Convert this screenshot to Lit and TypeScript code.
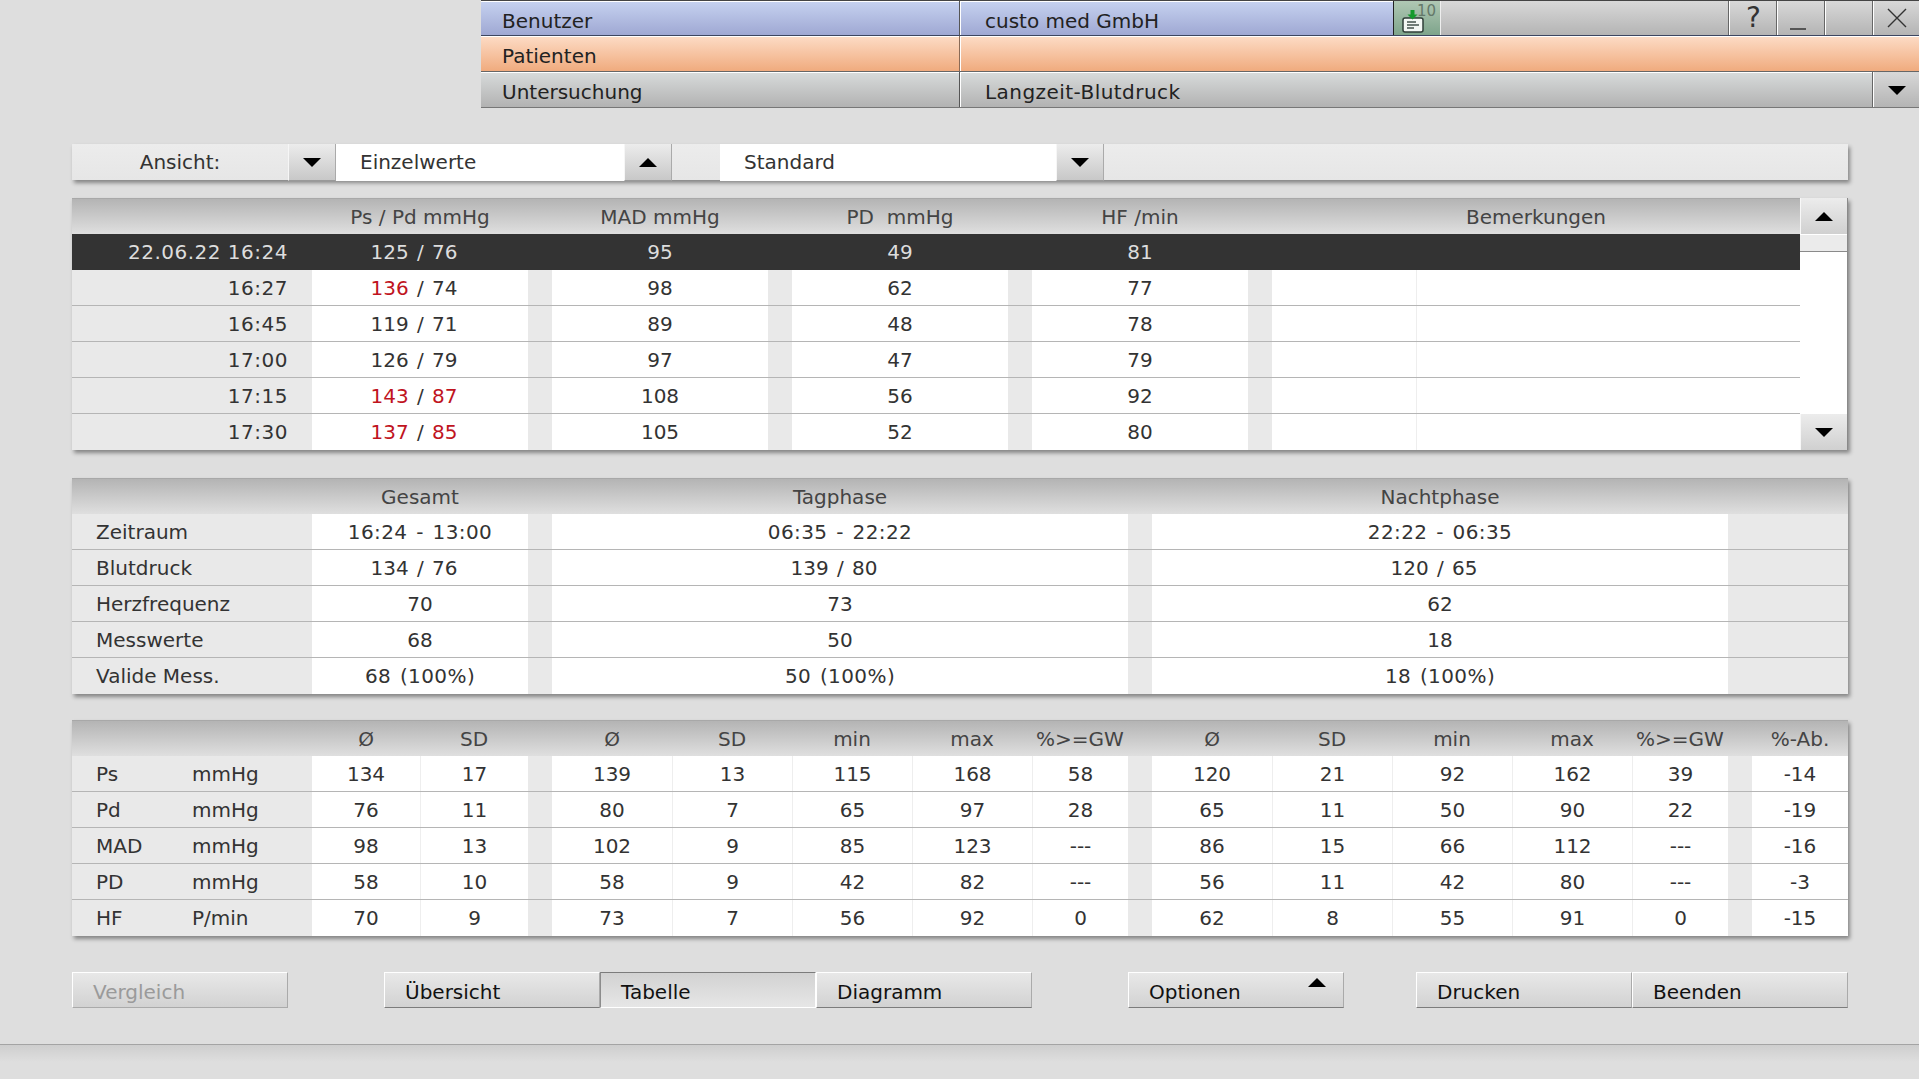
import { LitElement, html, css, svg } from 'lit';
import { customElement } from 'lit/decorators.js';

const arrow = (dir: 'up' | 'down') => html`
  <svg class="arrow" width="18" height="9" viewBox="0 0 18 9">
    ${dir === 'up'
      ? svg`<polygon points="9,0 18,9 0,9" fill="#000"></polygon>`
      : svg`<polygon points="0,0 18,0 9,9" fill="#000"></polygon>`}
  </svg>
`;

const singleRows = [
  { time: '22.06.22 16:24', ps: '125', pd: '76', mad: '95', pp: '49', hf: '81', sel: true },
  { time: '16:27', ps: '136', pd: '74', mad: '98', pp: '62', hf: '77', redPs: true },
  { time: '16:45', ps: '119', pd: '71', mad: '89', pp: '48', hf: '78' },
  { time: '17:00', ps: '126', pd: '79', mad: '97', pp: '47', hf: '79' },
  { time: '17:15', ps: '143', pd: '87', mad: '108', pp: '56', hf: '92', redPs: true, redPd: true },
  { time: '17:30', ps: '137', pd: '85', mad: '105', pp: '52', hf: '80', redPs: true, redPd: true },
];

const summaryRows = [
  ['Zeitraum', '16:24 - 13:00', '06:35 - 22:22', '22:22 - 06:35'],
  ['Blutdruck', '134 / 76', '139 / 80', '120 / 65'],
  ['Herzfrequenz', '70', '73', '62'],
  ['Messwerte', '68', '50', '18'],
  ['Valide Mess.', '68 (100%)', '50 (100%)', '18 (100%)'],
];

const statHead = ['Ø', 'SD', '', 'Ø', 'SD', 'min', 'max', '%>=GW', '', 'Ø', 'SD', 'min', 'max', '%>=GW', '', '%-Ab.'];

const statRows = [
  ['Ps', 'mmHg', '134', '17', '', '139', '13', '115', '168', '58', '', '120', '21', '92', '162', '39', '', '-14'],
  ['Pd', 'mmHg', '76', '11', '', '80', '7', '65', '97', '28', '', '65', '11', '50', '90', '22', '', '-19'],
  ['MAD', 'mmHg', '98', '13', '', '102', '9', '85', '123', '---', '', '86', '15', '66', '112', '---', '', '-16'],
  ['PD', 'mmHg', '58', '10', '', '58', '9', '42', '82', '---', '', '56', '11', '42', '80', '---', '', '-3'],
  ['HF', 'P/min', '70', '9', '', '73', '7', '56', '92', '0', '', '62', '8', '55', '91', '0', '', '-15'],
];

// "134 / 76" sits left of centre in the original, other multi-word values are only wider
const summaryClass = (v: string) => (v.includes('/') ? 'cell pair' : v.includes(' ') ? 'cell val' : 'cell');

@customElement('app-root')
export class AppRoot extends LitElement {
  static styles = css`
    :host {
      display: block;
      width: 1919px;
      height: 1079px;
      overflow: hidden;
      background: #dedede;
      color: #333;
      font-family: 'DejaVu Sans', sans-serif;
      font-size: 20px;
      line-height: 36px;
    }
    * {
      box-sizing: border-box;
    }
    .arrow {
      display: block;
      flex: none;
    }

    /* top bar */
    .topbar {
      margin-left: 481px;
      height: 108px;
      color: #222;
    }
    .bar-row {
      display: grid;
      grid-template-columns: 479px 433px 48px 288px 48px 48px 48px 46px;
      grid-auto-rows: 35px;
      height: 36px;
      border-bottom: 1px solid #555;
      box-shadow: inset 0 1px 0 #fff;
    }
    .bar-row.blue {
      background: linear-gradient(#c6d2f0, #9fa8d3);
      border-top: 1px solid #444;
      border-bottom-color: #3d4660;
      grid-auto-rows: 34px;
    }
    .bar-row.orange {
      background: linear-gradient(#fddcc6, #f0ab7e);
      border-bottom-color: #666;
    }
    .bar-row.grey {
      background: linear-gradient(#d8dbdb, #b2b2b2);
      border-bottom-color: #777;
      grid-template-columns: 479px 913px 47px;
    }
    .bar-label {
      padding-left: 21px;
      line-height: 41px;
    }
    .bar-value {
      padding-left: 24px;
      line-height: 41px;
      border-left: 1px solid #fff;
      box-shadow: -1px 0 0 #555;
    }
    .bar-row.blue .bar-label,
    .bar-row.blue .bar-value {
      line-height: 40px;
    }
    .bar-row.orange .bar-value {
      grid-column: 2 / -1;
      box-shadow: -1px 0 0 #8a6a55;
    }
    .bar-row.grey .bar-value {
      letter-spacing: 0.45px;
    }
    .bar-fill {
      background: linear-gradient(#d8d8d8, #b4b4b4);
    }
    .win-btn {
      display: flex;
      align-items: center;
      justify-content: center;
      background: linear-gradient(#d8d8d8, #b4b4b4);
      border-left: 1px solid #fff;
      box-shadow: -1px 0 0 #666;
      font-size: 28px;
      color: #333;
    }
    .win-btn .arrow {
      margin-top: 1px;
    }
    .win-min {
      padding-right: 8px;
    }
    .badge {
      position: relative;
      background: linear-gradient(#b0c8b4, #7ea48b);
      border-left: 1px solid #222;
      border-right: 1px solid #eee;
    }
    .badge svg {
      position: absolute;
      left: 8px;
      top: 9px;
    }
    .badge span {
      position: absolute;
      left: 23px;
      top: 2px;
      font-size: 15px;
      line-height: 16px;
      color: #64786a;
    }

    /* view selector */
    .toolbar {
      display: grid;
      grid-template-columns: 216px 48px 288px 48px 48px 336px 48px 1fr;
      height: 36px;
      margin: 36px 71px 18px 72px;
      background: linear-gradient(#ececec, #e6e6e6);
      box-shadow: 2px 3px 4px rgba(0, 0, 0, 0.4);
      line-height: 37px;
    }
    .tool-label {
      text-align: center;
    }
    .tool-field {
      background: #fff;
      padding-left: 24px;
    }
    .tool-btn {
      display: flex;
      align-items: center;
      justify-content: center;
      background: linear-gradient(#ececec, #c8c8c8);
      border-bottom: 1px solid #999;
      border-right: 1px solid #aaa;
      border-left: 1px solid #f6f6f6;
    }

    /* tables */
    .panel {
      margin: 0 71px 0 72px;
      background: #e9e9e9;
      box-shadow: 2px 3px 4px rgba(0, 0, 0, 0.4);
    }
    .panel-single {
      display: flex;
      height: 252px;
      background: #fff;
      margin-bottom: 28px;
    }
    .panel-summary {
      margin-bottom: 26px;
    }
    .panel-stats {
      margin-bottom: 36px;
    }
    .list {
      flex: 1;
      min-width: 0;
    }
    .row {
      display: grid;
      grid-auto-rows: 35px;
      height: 36px;
      line-height: 37px;
      text-align: center;
      border-bottom: 1px solid #b5b5b5;
      background: #e9e9e9;
    }
    .row:last-child {
      border-bottom: none;
      grid-auto-rows: 36px;
    }
    .head {
      background: linear-gradient(#b4b4b4, #dfdfdf);
      border-top: 1px solid #a8a8a8;
      border-bottom: none;
      color: #444;
      line-height: 36px;
    }
    .grid-single {
      grid-template-columns: 240px 216px 24px 216px 24px 216px 24px 216px 24px 144px 384px;
    }
    .grid-summary {
      grid-template-columns: 240px 216px 24px 576px 24px 576px 120px;
    }
    .grid-stats {
      grid-template-columns: 120px 120px 108px 108px 24px 120px 120px 120px 120px 96px 24px 120px 120px 120px 120px 96px 24px 96px;
    }
    .span-2 {
      grid-column: span 2;
    }
    .span-remark {
      grid-column: 10 / 12;
    }
    .cell {
      background: #fff;
    }
    .cell + .cell {
      border-left: 1px solid #eee;
    }
    .pair {
      word-spacing: 2px;
      padding-right: 12px;
    }
    .val {
      word-spacing: 2px;
      letter-spacing: 0.4px;
    }
    .time {
      text-align: right;
      padding-right: 24px;
      letter-spacing: 0.5px;
    }
    .name {
      text-align: left;
      padding-left: 24px;
    }
    .unit {
      text-align: left;
    }
    .red {
      color: #c0141e;
    }
    .sel {
      background: #333;
      color: #ddd;
      border-bottom: none;
      grid-auto-rows: 36px;
    }
    .pre {
      white-space: pre;
    }

    .scroll {
      display: flex;
      flex-direction: column;
      width: 48px;
      background: #fff;
      border-right: 1px solid #8a8a8a;
    }
    .scroll-btn {
      display: flex;
      align-items: center;
      justify-content: center;
      height: 36px;
      flex: none;
      background: linear-gradient(#ececec, #d0d0d0);
      border-left: 1px solid #f8f8f8;
    }
    .scroll-thumb {
      height: 18px;
      flex: none;
      background: #ebebeb;
      border-top: 1px solid #fff;
      border-bottom: 1px solid #8a8a8a;
    }
    .scroll-space {
      flex: 1;
    }

    /* buttons */
    .actions {
      display: grid;
      grid-template-columns: 216px 96px 216px 216px 216px 96px 216px 72px 216px 216px;
      margin-left: 72px;
      height: 36px;
    }
    .btn {
      position: relative;
      height: 36px;
      padding-left: 20px;
      color: #111;
      background: linear-gradient(#e8e8e8, #d2d2d2);
      border-top: 1px solid #fff;
      border-left: 1px solid #fff;
      border-right: 1px solid #aaa;
      border-bottom: 1px solid #7c7c7c;
      line-height: 38px;
    }
    .btn.off {
      color: #9a9a9a;
      border-bottom-color: #aaa;
    }
    .btn.on {
      background: linear-gradient(#d2d2d2, #e6e6e6);
      border-top: 1px solid #7c7c7c;
      border-left: 1px solid #8c8c8c;
      border-right: 1px solid #fff;
      border-bottom: 1px solid #fff;
    }
    .btn .arrow {
      position: absolute;
      right: 17px;
      top: 5px;
    }
    .gap {
      grid-column: span 1;
    }

    .footer {
      margin-top: 36px;
      height: 35px;
      border-top: 1px solid #a4a4a4;
      background: linear-gradient(#cecece, #dedede 50%);
    }
  `;

  render() {
    return html`
      <div class="topbar">
        <div class="bar-row blue">
          <div class="bar-label">Benutzer</div>
          <div class="bar-value">custo med GmbH</div>
          <div class="badge">
            <svg width="22" height="23" viewBox="0 0 22 23">
              <rect x="1" y="8" width="20" height="14" rx="2" fill="#f4f8f4" stroke="#2f3f38" stroke-width="1.5"></rect>
              <path d="M8.5 0h4v4.5h3l-5 5-5-5h3z" fill="#149a2c"></path>
              <path d="M5 12h9M5 15h12M5 18h7" stroke="#46544d" stroke-width="1.5"></path>
            </svg>
            <span>10</span>
          </div>
          <div class="bar-fill"></div>
          <div class="win-btn">?</div>
          <div class="win-btn win-min">
            <svg width="18" height="28" viewBox="0 0 18 28"><rect x="1" y="24" width="16" height="2" fill="#555"></rect></svg>
          </div>
          <div class="win-btn"></div>
          <div class="win-btn">
            <svg width="20" height="20" viewBox="0 0 20 20"><path d="M1 1l18 18M19 1L1 19" stroke="#333" stroke-width="1.4" fill="none"></path></svg>
          </div>
        </div>
        <div class="bar-row orange">
          <div class="bar-label">Patienten</div>
          <div class="bar-value"></div>
        </div>
        <div class="bar-row grey">
          <div class="bar-label">Untersuchung</div>
          <div class="bar-value">Langzeit-Blutdruck</div>
          <div class="win-btn">${arrow('down')}</div>
        </div>
      </div>

      <div class="toolbar">
        <div class="tool-label">Ansicht:</div>
        <div class="tool-btn">${arrow('down')}</div>
        <div class="tool-field">Einzelwerte</div>
        <div class="tool-btn">${arrow('up')}</div>
        <div></div>
        <div class="tool-field">Standard</div>
        <div class="tool-btn">${arrow('down')}</div>
      </div>

      <div class="panel panel-single">
        <div class="list">
          <div class="row head grid-single">
            <div></div>
            <div>Ps / Pd mmHg</div>
            <div></div>
            <div>MAD mmHg</div>
            <div></div>
            <div class="pre">PD  mmHg</div>
            <div></div>
            <div>HF /min</div>
            <div></div>
            <div class="span-remark">Bemerkungen</div>
          </div>
          ${singleRows.map((r) =>
            r.sel
              ? html`
                  <div class="row grid-single sel">
                    <div class="time">${r.time}</div>
                    <div class="pair">${r.ps} / ${r.pd}</div>
                    <div></div>
                    <div>${r.mad}</div>
                    <div></div>
                    <div>${r.pp}</div>
                    <div></div>
                    <div>${r.hf}</div>
                  </div>
                `
              : html`
                  <div class="row grid-single">
                    <div class="time">${r.time}</div>
                    <div class="cell pair">
                      <span class=${r.redPs ? 'red' : ''}>${r.ps}</span> / <span class=${r.redPd ? 'red' : ''}>${r.pd}</span>
                    </div>
                    <div></div>
                    <div class="cell">${r.mad}</div>
                    <div></div>
                    <div class="cell">${r.pp}</div>
                    <div></div>
                    <div class="cell">${r.hf}</div>
                    <div></div>
                    <div class="cell"></div>
                    <div class="cell"></div>
                  </div>
                `,
          )}
        </div>
        <div class="scroll">
          <div class="scroll-btn">${arrow('up')}</div>
          <div class="scroll-thumb"></div>
          <div class="scroll-space"></div>
          <div class="scroll-btn">${arrow('down')}</div>
        </div>
      </div>

      <div class="panel panel-summary">
        <div class="row head grid-summary">
          <div></div>
          <div>Gesamt</div>
          <div></div>
          <div>Tagphase</div>
          <div></div>
          <div>Nachtphase</div>
          <div></div>
        </div>
        ${summaryRows.map(
          (r) => html`
            <div class="row grid-summary">
              <div class="name">${r[0]}</div>
              <div class=${summaryClass(r[1])}>${r[1]}</div>
              <div></div>
              <div class=${summaryClass(r[2])}>${r[2]}</div>
              <div></div>
              <div class=${summaryClass(r[3])}>${r[3]}</div>
              <div></div>
            </div>
          `,
        )}
      </div>

      <div class="panel panel-stats">
        <div class="row head grid-stats">
          <div class="span-2"></div>
          ${statHead.map((h) => html`<div>${h}</div>`)}
        </div>
        ${statRows.map(
          (r) => html`
            <div class="row grid-stats">
              <div class="name">${r[0]}</div>
              <div class="unit">${r[1]}</div>
              ${r.slice(2).map((v) => (v === '' ? html`<div></div>` : html`<div class="cell">${v}</div>`))}
            </div>
          `,
        )}
      </div>

      <div class="actions">
        <div class="btn off">Vergleich</div>
        <div class="gap"></div>
        <div class="btn">Übersicht</div>
        <div class="btn on">Tabelle</div>
        <div class="btn">Diagramm</div>
        <div class="gap"></div>
        <div class="btn">Optionen ${arrow('up')}</div>
        <div class="gap"></div>
        <div class="btn">Drucken</div>
        <div class="btn">Beenden</div>
      </div>

      <div class="footer"></div>
    `;
  }
}
